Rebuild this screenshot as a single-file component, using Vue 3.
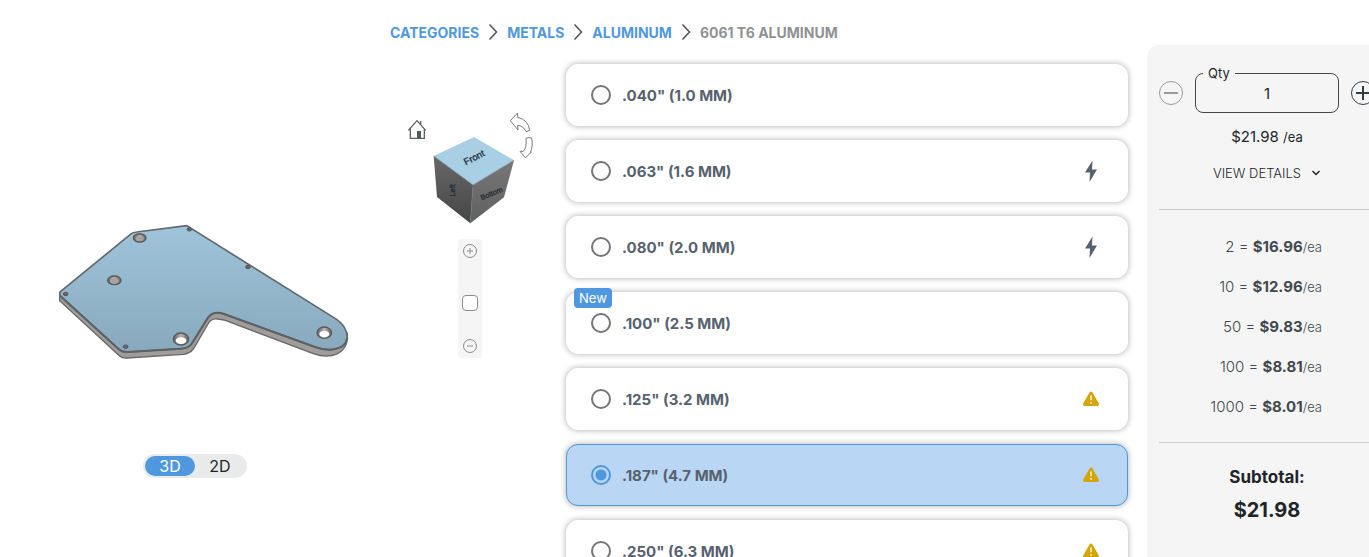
<template>
  <div class="page">
    <main class="main">
      <nav class="breadcrumbs" aria-label="Breadcrumb">
        <template v-for="crumb in crumbs" :key="crumb">
          <a href="#">{{ crumb }}</a>
          <svg width="10" height="18" viewBox="0 0 10 18">
            <path d="M1.500 1.500 8.500 9l-7 7.500" />
          </svg>
        </template>
        <span>6061 T6 ALUMINUM</span>
      </nav>

      <section class="model">
        <svg class="part" viewBox="-15 0 960 510" role="img" aria-label="Part preview">
          <defs>
            <linearGradient id="sheet" x1="0" y1="0" x2="0" y2="1">
              <stop offset="0" stop-color="#9fc4da" />
              <stop offset="1" stop-color="#88a9bd" />
            </linearGradient>
            <linearGradient id="bore">
              <stop offset="0" stop-color="#66615f" />
              <stop offset="0.5" stop-color="#b9b4b2" />
              <stop offset="1" stop-color="#666160" />
            </linearGradient>
          </defs>
          <path
            class="side"
            d="M59 247V272L238 437Q246 445 262 444L430 433Q449 431 460 417L504 342Q513 324 533 327L552 330L820 431Q862 446 893 431Q922 415 922 383V370L700 300L400 300Z"
          />
          <path
            class="top"
            d="M62 244L274 71Q280 67 290 66L440 47L890 328Q922 351 922 383Q917 412 886 417Q859 423 825 411L552 312Q520 301 504 323L456 400Q447 415 424 416L264 426Q247 427 238 419L61 258Q57 250 62 244Z"
          />
          <path class="edge" d="M61 258L238 419Q247 427 264 426L424 416Q447 415 456 400L504 323Q520 301 552 312L825 411Q859 423 886 417Q917 412 922 383" />
          <g v-for="hole in holes" :key="hole.x">
            <ellipse :cx="hole.x" :cy="hole.y" :rx="hole.rx" :ry="hole.ry" class="hole" />
            <ellipse
              :cx="hole.x"
              :cy="hole.y + hole.drop"
              :rx="hole.rx - 7"
              :ry="hole.ry - hole.drop - 3"
              :class="hole.open ? 'through' : 'inner'"
            />
          </g>
          <ellipse v-for="pin in pins" :key="pin.x" :cx="pin.x" :cy="pin.y" rx="7" ry="5" class="pin" />
        </svg>
        <div class="toggle">
          <button type="button" :class="{ active: view === '3D' }" @click="view = '3D'">3D</button>
          <button type="button" :class="{ active: view === '2D' }" @click="view = '2D'">2D</button>
        </div>
      </section>

      <section class="tools">
        <svg class="cube" viewBox="0 0 480 390" role="img" aria-label="View cube">
          <defs>
            <linearGradient id="left" x1="0" y1="0" x2="0" y2="1">
              <stop offset="0" stop-color="#686868" />
              <stop offset="1" stop-color="#454545" />
            </linearGradient>
            <linearGradient id="bottom" x1="0" y1="0" x2="0" y2="1">
              <stop offset="0" stop-color="#777" />
              <stop offset="1" stop-color="#606060" />
            </linearGradient>
          </defs>
          <path class="house" d="M55 91 81 62l26 29M61 86v29h42V86M92 63v10" />
          <path class="door" d="M81 93h12v22H81z" />
          <path class="arrow" d="M361 62 383 39v13q32 7 36 39l-11 4q-8-18-25-19l1 14Z" />
          <path class="arrow" d="M408 115q9-4 17-1q5 26-4 43h3l-18 16-16-19h10q11-13 8-39Z" />
          <path d="M131 168 249 255 241 370 141 291Z" fill="url(#left)" />
          <path d="M249 255 372 181 342 292 241 370Z" fill="url(#bottom)" />
          <path d="M131 168 252 111 372 181 249 255Z" fill="#a8cfe4" />
          <path d="M131 168 249 255 372 181M249 255 241 370" class="cube-edge" />
          <text x="252" y="182" transform="rotate(-27 252 172)">Front</text>
          <text x="304" y="288" transform="rotate(-23 304 280)" class="small">Bottom</text>
          <text x="185" y="280" transform="rotate(-90 185 271)" class="small">Left</text>
        </svg>
        <div class="zoom">
          <button type="button" aria-label="Zoom in">
            <svg width="16" height="16" viewBox="0 0 16 16">
              <circle cx="8" cy="8" r="6.500" />
              <path d="M5 8h6M8 5v6" />
            </svg>
          </button>
          <button type="button" class="fit" aria-label="Fit to view"></button>
          <button type="button" aria-label="Zoom out">
            <svg width="16" height="16" viewBox="0 0 16 16">
              <circle cx="8" cy="8" r="6.500" />
              <path d="M5 8h6" />
            </svg>
          </button>
        </div>
      </section>

      <section class="options">
        <label
          v-for="option in options"
          :key="option.name"
          class="option"
          :class="{ selected: thickness === option.name }"
        >
          <span v-if="option.isNew" class="badge">New</span>
          <input v-model="thickness" type="radio" name="thickness" :value="option.name" />
          <span class="name">{{ option.name }}</span>
          <svg v-if="option.icon === 'bolt'" width="24" height="24" viewBox="0 0 24 24">
            <path d="M13.500 1.500 6 13.500h5L10.500 23 18 10.500h-5Z" fill="#56626e" />
          </svg>
          <svg v-if="option.icon === 'warning'" width="24" height="24" viewBox="0 0 24 24">
            <path d="M10.500 5.500Q12 3.500 13.500 5.500L19.700 16.300Q20.700 19 18.200 19H5.800Q3.300 19 4.300 16.300Z" fill="#d6a50a" />
            <path d="M12 8.500v4.700M12 15v1.800" stroke="#fff3cc" stroke-width="1.600" />
          </svg>
        </label>
      </section>
    </main>

    <aside class="panel">
      <div class="quantity">
        <button type="button" class="step muted" aria-label="Decrease quantity" @click="qty = Math.max(1, qty - 1)">
          <svg width="24" height="24" viewBox="0 0 24 24">
            <circle cx="12" cy="12" r="11.500" />
            <path d="M5 12h14" />
          </svg>
        </button>
        <fieldset>
          <legend><label for="qty">Qty</label></legend>
          <input id="qty" v-model.number="qty" type="text" />
        </fieldset>
        <button type="button" class="step" aria-label="Increase quantity" @click="qty++">
          <svg width="24" height="24" viewBox="0 0 24 24">
            <circle cx="12" cy="12" r="11.500" />
            <path d="M5 12h14M12 5v14" />
          </svg>
        </button>
      </div>
      <p class="unit">$21.98 <small>/ea</small></p>
      <button type="button" class="details">
        VIEW DETAILS
        <svg width="10" height="8" viewBox="0 0 10 8"><path d="m1.500 2 3.500 3.500L8.500 2" /></svg>
      </button>
      <ul class="breaks">
        <li v-for="item in breaks" :key="item.count">
          {{ item.count }} = <b>{{ item.price }}</b><small>/ea</small>
        </li>
      </ul>
      <p class="subtotal">Subtotal:</p>
      <p class="total">$21.98</p>
    </aside>
  </div>
</template>

<script setup>
import { ref } from "vue";

const view = ref("3D");
const qty = ref(1);
const thickness = ref('.187" (4.7 MM)');

const crumbs = ["CATEGORIES", "METALS", "ALUMINUM"];

const options = [
  { name: '.040" (1.0 MM)' },
  { name: '.063" (1.6 MM)', icon: "bolt" },
  { name: '.080" (2.0 MM)', icon: "bolt" },
  { name: '.100" (2.5 MM)', isNew: true },
  { name: '.125" (3.2 MM)', icon: "warning" },
  { name: '.187" (4.7 MM)', icon: "warning" },
  { name: '.250" (6.3 MM)', icon: "warning" },
];

const breaks = [
  { count: 2, price: "$16.96" },
  { count: 10, price: "$12.96" },
  { count: 50, price: "$9.83" },
  { count: 100, price: "$8.81" },
  { count: 1000, price: "$8.01" },
];

const holes = [
  { x: 299, y: 84, rx: 19, ry: 12, drop: 2 },
  { x: 223, y: 211, rx: 20, ry: 13, drop: 2 },
  { x: 423, y: 387, rx: 23, ry: 18, drop: 5, open: true },
  { x: 853, y: 368, rx: 22, ry: 17, drop: 4, open: true },
];

const pins = [
  { x: 77, y: 252 },
  { x: 257, y: 410 },
  { x: 448, y: 58 },
  { x: 624, y: 171 },
];
</script>

<style>
body {
  margin: 0;
  background: #fff;
  overflow: hidden;
}
</style>

<style scoped>
.page {
  display: flex;
  height: 100vh;
  font-family: Inter, "Liberation Sans", sans-serif;
  color: #212529;
}

button {
  padding: 0;
  border: 0;
  background: none;
  font: inherit;
  color: inherit;
  cursor: pointer;
}

p {
  margin: 0;
}

.main {
  flex: 1;
  display: grid;
  grid-template-columns: 390px 176px 1fr;
  grid-template-rows: 64px 1fr;
}

.breadcrumbs {
  grid-column: 2 / 4;
  display: flex;
  align-items: center;
  gap: 9px;
  font-size: 14px;
  font-weight: 700;
  color: #8f9294;

  a {
    color: #4f98df;
    text-decoration: none;
  }

  svg {
    fill: none;
    stroke: #4b5157;
    stroke-width: 1.5;
  }
}

.model {
  grid-column: 1;
  display: flex;
  flex-direction: column;
  align-items: center;
  padding-top: 146px;
}

.part {
  width: 320px;
  height: 170px;
  margin-bottom: 74px;

  .side {
    fill: #a19c9a;
    stroke: #66696b;
    stroke-width: 4;
  }

  .top {
    fill: url(#sheet);
    stroke: #62686c;
    stroke-width: 5;
  }

  .edge {
    fill: none;
    stroke: #5c6165;
    stroke-width: 6;
  }

  .hole {
    fill: url(#bore);
    stroke: #56585a;
    stroke-width: 4;
  }

  .inner {
    fill: #a8a3a1;
  }

  .through {
    fill: #fff;
  }

  .pin {
    fill: #67686a;
    stroke: #505356;
    stroke-width: 3;
  }
}

.toggle {
  display: flex;
  padding: 2px;
  border-radius: 12px;
  background: #e9ebeb;

  button {
    width: 50px;
    height: 20px;
    border-radius: 10px;
    font-size: 16px;
    line-height: 20px;
  }

  .active {
    background: #4f98df;
    color: #fff;
  }
}

.tools {
  padding-top: 36px;
}

.cube {
  display: block;
  width: 160px;
  height: 130px;

  .house {
    fill: none;
    stroke: #5d5f61;
    stroke-width: 4;
  }

  .door {
    fill: #55585a;
  }

  .arrow {
    fill: #fff;
    stroke: #77797b;
    stroke-width: 3;
  }

  .cube-edge {
    fill: none;
    stroke: #6c777e;
    stroke-width: 2;
  }

  text {
    font-family: "Liberation Sans", sans-serif;
    font-size: 28px;
    text-anchor: middle;
    fill: #263038;
    stroke: #263038;
    stroke-width: 1;
  }

  .small {
    font-size: 22px;
  }
}

.zoom {
  display: flex;
  flex-direction: column;
  align-items: center;
  width: 24px;
  height: 111px;
  margin: 9px 0 0 68px;
  padding: 4px 0;
  border-radius: 3px;
  background: #f5f5f5;

  button {
    width: 16px;
    height: 16px;
  }

  svg {
    display: block;
    fill: none;
    stroke: #8c8c8c;
  }

  .fit {
    box-sizing: border-box;
    margin: 36px 0 27px;
    border: 1px solid #8c8c8c;
    border-radius: 4px;
    background: #fff;
  }
}

.options {
  display: flex;
  flex-direction: column;
  gap: 14px;
}

.option {
  position: relative;
  flex: none;
  display: flex;
  align-items: center;
  gap: 11px;
  box-sizing: border-box;
  height: 62px;
  padding: 0 24px;
  border: 1px solid #fff;
  border-radius: 12px;
  background: #fff;
  box-shadow: 0 0 6px rgba(0, 0, 0, 0.32);
  cursor: pointer;

  &.selected {
    border-color: #4f98df;
    background: #b9d6f4;
  }

  input {
    appearance: none;
    box-sizing: border-box;
    width: 20px;
    height: 20px;
    margin: 0;
    border: 2px solid #757575;
    border-radius: 50%;
  }

  input:checked {
    border-color: #4f98df;
    background: radial-gradient(circle, #4f98df 5px, transparent 6px);
  }
}

.name {
  flex: 1;
  font-size: 15px;
  font-weight: 700;
  color: #56626e;
}

.badge {
  position: absolute;
  top: -5px;
  left: 7px;
  padding: 0 5px;
  border-radius: 4px;
  background: #4f98df;
  color: #fff;
  font-size: 13px;
  line-height: 20px;
}

.panel {
  flex: none;
  box-sizing: border-box;
  width: 240px;
  margin: 45px -18px 0 19px;
  padding: 20px 12px;
  border-radius: 12px 0 0 0;
  background: #f5f5f5;
  text-align: center;
}

.quantity {
  display: flex;
  align-items: flex-end;
  gap: 12px;
  height: 48px;

  fieldset {
    box-sizing: border-box;
    width: 144px;
    height: 48px;
    min-width: 0;
    margin: 0;
    padding: 0 7px;
    border: 1px solid #43484d;
    border-radius: 8px;
    text-align: left;
  }

  legend {
    padding: 0 5px;
    font-size: 13px;
    line-height: 16px;
  }

  input {
    display: block;
    box-sizing: border-box;
    width: 100%;
    height: 24px;
    padding: 0;
    border: 0;
    outline: 0;
    background: none;
    color: inherit;
    font: inherit;
    font-size: 15px;
    text-align: center;
  }
}

.step {
  flex: none;
  height: 24px;
  margin-bottom: 8px;

  svg {
    display: block;
    fill: none;
    stroke: #343a40;
  }

  path {
    stroke-width: 2;
  }

  &.muted svg {
    stroke: #989a9c;
  }
}

.unit {
  height: 24px;
  margin-top: 12px;
  font-size: 15px;
  line-height: 24px;

  small {
    font-size: 13px;
  }
}

.details {
  display: flex;
  align-items: center;
  justify-content: center;
  gap: 10px;
  width: 100%;
  height: 24px;
  margin-top: 12px;
  font-size: 13px;
  font-weight: 300;

  svg {
    fill: none;
    stroke: #212529;
    stroke-width: 1.5;
  }
}

.breaks {
  margin: 24px 0 23px;
  padding: 17px 53px 15px 0;
  border: solid #ccc;
  border-width: 1px 0;
  list-style: none;
  font-size: 15px;
  line-height: 40px;
  font-weight: 300;
  text-align: right;
  white-space: nowrap;
  color: #41494f;

  li {
    height: 40px;
  }

  b {
    font-weight: 700;
  }

  small {
    font-size: 13px;
  }
}

.subtotal {
  font-size: 17px;
  line-height: 22px;
  font-weight: 700;
}

.total {
  margin-top: 8px;
  font-size: 20px;
  line-height: 28px;
  font-weight: 700;
}
</style>
